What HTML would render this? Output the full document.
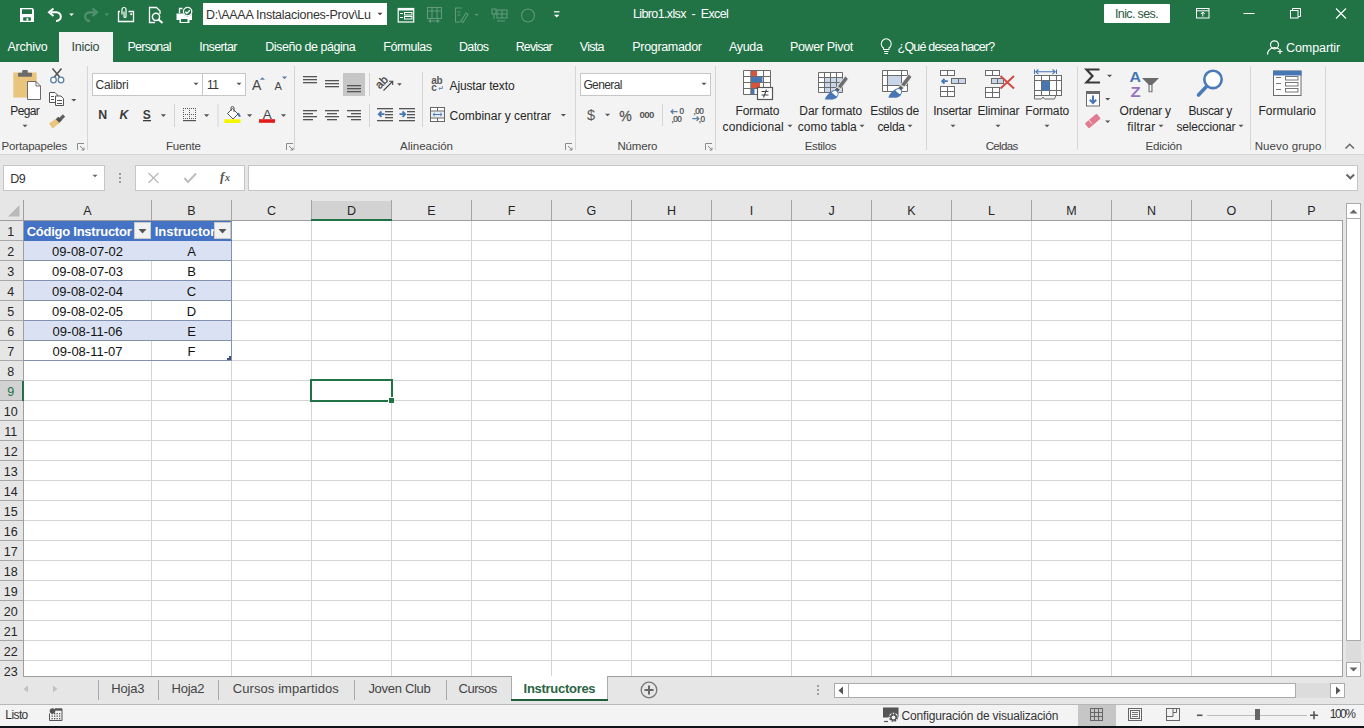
<!DOCTYPE html>
<html><head><meta charset="utf-8">
<style>
*{margin:0;padding:0;box-sizing:border-box}
html,body{width:1364px;height:728px;overflow:hidden;background:#e6e6e6;font-family:"Liberation Sans",sans-serif;position:relative}
.a{position:absolute;display:block}
.t{position:absolute;white-space:nowrap;line-height:1}
</style></head><body>
<div class="a" style="left:0px;top:0px;width:1364px;height:62px;background:#217346;"></div><div class="a" style="left:0px;top:62px;width:1364px;height:92px;background:#f3f3f3;"></div><div class="a" style="left:0px;top:154px;width:1364px;height:1px;background:#d5d5d5;"></div><div class="a" style="left:0px;top:155px;width:1364px;height:46px;background:#e6e6e6;"></div><div class="a" style="left:0px;top:726px;width:1364px;height:2px;background:#10141a;"></div><div class="t" style="left:633.0px;top:8.42px;font-size:12.50px;color:#ffffff;white-space:pre;letter-spacing:-0.629px;">Libro1.xlsx  -  Excel</div><div class="a" style="left:203px;top:3px;width:184px;height:22px;background:#fff;"></div><div class="t" style="left:206.0px;top:8.92px;font-size:12.50px;color:#333;letter-spacing:-0.261px;">D:\AAAA Instalaciones-Prov\Lu</div><svg class="a" style="left:376px;top:11px;" width="8" height="6" viewBox="0 0 8 6"><path d="M1.5 1.75h5.0l-2.5 2.5z" fill="#444"/></svg><div class="a" style="left:1104px;top:4px;width:66px;height:19px;background:#fff;border-radius:1px;"></div><div class="t" style="left:1115.0px;top:7.62px;font-size:12.50px;color:#2d5a3f;letter-spacing:-0.636px;">Inic. ses.</div><div class="a" style="left:59px;top:32px;width:54px;height:30px;background:#f3f3f3;"></div><div class="t" style="left:7.4px;top:41.42px;font-size:12.50px;color:#ffffff;letter-spacing:-0.214px;">Archivo</div><div class="t" style="left:71.6px;top:41.42px;font-size:12.50px;color:#2f4a3a;letter-spacing:-0.256px;">Inicio</div><div class="t" style="left:127.4px;top:41.42px;font-size:12.50px;color:#ffffff;letter-spacing:-0.734px;">Personal</div><div class="t" style="left:199.3px;top:41.42px;font-size:12.50px;color:#ffffff;letter-spacing:-0.597px;">Insertar</div><div class="t" style="left:265.2px;top:41.42px;font-size:12.50px;color:#ffffff;letter-spacing:-0.447px;">Diseño de página</div><div class="t" style="left:383.3px;top:41.42px;font-size:12.50px;color:#ffffff;letter-spacing:-0.485px;">Fórmulas</div><div class="t" style="left:458.9px;top:41.42px;font-size:12.50px;color:#ffffff;letter-spacing:-0.614px;">Datos</div><div class="t" style="left:515.7px;top:41.42px;font-size:12.50px;color:#ffffff;letter-spacing:-0.879px;">Revisar</div><div class="t" style="left:579.8px;top:41.42px;font-size:12.50px;color:#ffffff;letter-spacing:-0.741px;">Vista</div><div class="t" style="left:632.3px;top:41.42px;font-size:12.50px;color:#ffffff;letter-spacing:-0.325px;">Programador</div><div class="t" style="left:729.0px;top:41.42px;font-size:12.50px;color:#ffffff;letter-spacing:-0.330px;">Ayuda</div><div class="t" style="left:790.0px;top:41.42px;font-size:12.50px;color:#ffffff;letter-spacing:-0.349px;">Power Pivot</div><div class="t" style="left:897.6px;top:41.42px;font-size:12.50px;color:#ffffff;letter-spacing:-0.806px;">¿Qué desea hacer?</div><div class="t" style="left:1286.0px;top:41.62px;font-size:12.50px;color:#ffffff;letter-spacing:-0.084px;">Compartir</div><div class="a" style="left:87px;top:66px;width:1px;height:84px;background:#d5d5d5;"></div><div class="a" style="left:294px;top:66px;width:1px;height:84px;background:#d5d5d5;"></div><div class="a" style="left:575px;top:66px;width:1px;height:84px;background:#d5d5d5;"></div><div class="a" style="left:715px;top:66px;width:1px;height:84px;background:#d5d5d5;"></div><div class="a" style="left:926px;top:66px;width:1px;height:84px;background:#d5d5d5;"></div><div class="a" style="left:1077px;top:66px;width:1px;height:84px;background:#d5d5d5;"></div><div class="a" style="left:1250px;top:66px;width:1px;height:84px;background:#d5d5d5;"></div><div class="a" style="left:1325px;top:66px;width:1px;height:84px;background:#d5d5d5;"></div><div class="t" style="left:1.6px;top:140.56px;font-size:11.50px;color:#444;letter-spacing:-0.188px;">Portapapeles</div><div class="t" style="left:166.0px;top:140.56px;font-size:11.50px;color:#444;letter-spacing:-0.161px;">Fuente</div><div class="t" style="left:400.0px;top:140.56px;font-size:11.50px;color:#444;letter-spacing:-0.007px;">Alineación</div><div class="t" style="left:617.5px;top:141.06px;font-size:11.50px;color:#444;letter-spacing:-0.180px;">Número</div><div class="t" style="left:804.8px;top:140.76px;font-size:11.50px;color:#444;letter-spacing:-0.379px;">Estilos</div><div class="t" style="left:985.7px;top:141.06px;font-size:11.50px;color:#444;letter-spacing:-0.660px;">Celdas</div><div class="t" style="left:1145.6px;top:141.06px;font-size:11.50px;color:#444;letter-spacing:-0.203px;">Edición</div><div class="t" style="left:1254.7px;top:141.06px;font-size:11.50px;color:#444;letter-spacing:0.095px;">Nuevo grupo</div><div class="a" style="left:92px;top:73px;width:111px;height:23px;background:#fff;border:1px solid #c6c6c6;"></div><div class="a" style="left:202px;top:73px;width:44px;height:23px;background:#fff;border:1px solid #c6c6c6;"></div><svg class="a" style="left:191.6px;top:81.3px;" width="8" height="6" viewBox="0 0 8 6"><path d="M1.5 1.75h5.0l-2.5 2.5z" fill="#555"/></svg><svg class="a" style="left:234.5px;top:81.3px;" width="8" height="6" viewBox="0 0 8 6"><path d="M1.5 1.75h5.0l-2.5 2.5z" fill="#555"/></svg><div class="a" style="left:580px;top:73px;width:131px;height:23px;background:#fff;border:1px solid #c6c6c6;"></div><svg class="a" style="left:699.5px;top:81.3px;" width="8" height="6" viewBox="0 0 8 6"><path d="M1.5 1.75h5.0l-2.5 2.5z" fill="#555"/></svg><div class="t" style="left:10.3px;top:105.14px;font-size:12.00px;color:#262626;letter-spacing:-0.631px;">Pegar</div><svg class="a" style="left:20.5px;top:123px;" width="8" height="6" viewBox="0 0 8 6"><path d="M1.5 1.75h5.0l-2.5 2.5z" fill="#555"/></svg><div class="t" style="left:95.6px;top:78.64px;font-size:12.00px;color:#333;letter-spacing:-0.168px;">Calibri</div><div class="t" style="left:207.0px;top:78.64px;font-size:12.00px;color:#333;letter-spacing:-0.6px;">11</div><div class="t" style="left:449.6px;top:79.64px;font-size:12.00px;color:#262626;letter-spacing:-0.142px;">Ajustar texto</div><div class="t" style="left:449.6px;top:110.34px;font-size:12.00px;color:#262626;letter-spacing:-0.032px;">Combinar y centrar</div><div class="t" style="left:583.4px;top:78.84px;font-size:12.00px;color:#333;letter-spacing:-0.615px;">General</div><div class="t" style="left:735.5px;top:104.84px;font-size:12.00px;color:#262626;letter-spacing:-0.113px;">Formato</div><div class="t" style="left:722.6px;top:120.64px;font-size:12.00px;color:#262626;letter-spacing:0.096px;">condicional</div><div class="t" style="left:799.3px;top:104.84px;font-size:12.00px;color:#262626;letter-spacing:-0.035px;">Dar formato</div><div class="t" style="left:797.8px;top:120.64px;font-size:12.00px;color:#262626;letter-spacing:0.033px;">como tabla</div><div class="t" style="left:870.3px;top:104.84px;font-size:12.00px;color:#262626;letter-spacing:-0.359px;">Estilos de</div><div class="t" style="left:877.4px;top:120.64px;font-size:12.00px;color:#262626;letter-spacing:-0.272px;">celda</div><div class="t" style="left:933.3px;top:104.74px;font-size:12.00px;color:#262626;letter-spacing:-0.283px;">Insertar</div><div class="t" style="left:977.4px;top:104.74px;font-size:12.00px;color:#262626;letter-spacing:-0.178px;">Eliminar</div><div class="t" style="left:1025.3px;top:104.74px;font-size:12.00px;color:#262626;letter-spacing:-0.113px;">Formato</div><div class="t" style="left:1119.6px;top:105.04px;font-size:12.00px;color:#262626;letter-spacing:-0.245px;">Ordenar y</div><div class="t" style="left:1127.3px;top:120.64px;font-size:12.00px;color:#262626;letter-spacing:0.205px;">filtrar</div><div class="t" style="left:1188.5px;top:105.04px;font-size:12.00px;color:#262626;letter-spacing:-0.426px;">Buscar y</div><div class="t" style="left:1176.4px;top:120.64px;font-size:12.00px;color:#262626;letter-spacing:-0.170px;">seleccionar</div><div class="t" style="left:1258.5px;top:105.44px;font-size:12.00px;color:#262626;letter-spacing:0.017px;">Formulario</div><svg class="a" style="left:786.2px;top:123.3px;" width="8" height="6" viewBox="0 0 8 6"><path d="M1.5 1.75h5.0l-2.5 2.5z" fill="#555"/></svg><svg class="a" style="left:858.3px;top:123.3px;" width="8" height="6" viewBox="0 0 8 6"><path d="M1.5 1.75h5.0l-2.5 2.5z" fill="#555"/></svg><svg class="a" style="left:906.4px;top:123.3px;" width="8" height="6" viewBox="0 0 8 6"><path d="M1.5 1.75h5.0l-2.5 2.5z" fill="#555"/></svg><svg class="a" style="left:948.5px;top:122.9px;" width="8" height="6" viewBox="0 0 8 6"><path d="M1.5 1.75h5.0l-2.5 2.5z" fill="#555"/></svg><svg class="a" style="left:994.4px;top:122.9px;" width="8" height="6" viewBox="0 0 8 6"><path d="M1.5 1.75h5.0l-2.5 2.5z" fill="#555"/></svg><svg class="a" style="left:1043.4px;top:122.9px;" width="8" height="6" viewBox="0 0 8 6"><path d="M1.5 1.75h5.0l-2.5 2.5z" fill="#555"/></svg><svg class="a" style="left:1157px;top:123.2px;" width="8" height="6" viewBox="0 0 8 6"><path d="M1.5 1.75h5.0l-2.5 2.5z" fill="#555"/></svg><svg class="a" style="left:1236.8px;top:123.2px;" width="8" height="6" viewBox="0 0 8 6"><path d="M1.5 1.75h5.0l-2.5 2.5z" fill="#555"/></svg><div class="a" style="left:3px;top:165px;width:102px;height:26px;background:#fff;border:1px solid #c6c6c6;"></div><div class="t" style="left:10.3px;top:173.42px;font-size:12.50px;color:#333;letter-spacing:-0.579px;">D9</div><svg class="a" style="left:90.5px;top:172.7px;" width="8" height="6" viewBox="0 0 8 6"><path d="M1.5 1.75h5.0l-2.5 2.5z" fill="#666"/></svg><div class="a" style="left:119px;top:173px;width:2px;height:2px;background:#9a9a9a;"></div><div class="a" style="left:119px;top:177px;width:2px;height:2px;background:#9a9a9a;"></div><div class="a" style="left:119px;top:181px;width:2px;height:2px;background:#9a9a9a;"></div><div class="a" style="left:135px;top:165px;width:110px;height:26px;background:#fff;border:1px solid #c6c6c6;"></div><div class="a" style="left:248px;top:165px;width:1110px;height:26px;background:#fff;border:1px solid #c6c6c6;"></div><div class="a" style="left:24px;top:201px;width:1319px;height:19px;background:#e6e6e6;"></div><div class="a" style="left:311px;top:201px;width:81px;height:18px;background:#d2d2d2;"></div><div class="a" style="left:0px;top:220px;width:1343px;height:1px;background:#9e9e9e;"></div><div class="a" style="left:23px;top:200px;width:1px;height:20px;background:#a5a5a5;"></div><div class="a" style="left:151px;top:200px;width:1px;height:20px;background:#a5a5a5;"></div><div class="a" style="left:231px;top:200px;width:1px;height:20px;background:#a5a5a5;"></div><div class="a" style="left:311px;top:200px;width:1px;height:20px;background:#a5a5a5;"></div><div class="a" style="left:391px;top:200px;width:1px;height:20px;background:#a5a5a5;"></div><div class="a" style="left:471px;top:200px;width:1px;height:20px;background:#a5a5a5;"></div><div class="a" style="left:551px;top:200px;width:1px;height:20px;background:#a5a5a5;"></div><div class="a" style="left:631px;top:200px;width:1px;height:20px;background:#a5a5a5;"></div><div class="a" style="left:711px;top:200px;width:1px;height:20px;background:#a5a5a5;"></div><div class="a" style="left:791px;top:200px;width:1px;height:20px;background:#a5a5a5;"></div><div class="a" style="left:871px;top:200px;width:1px;height:20px;background:#a5a5a5;"></div><div class="a" style="left:951px;top:200px;width:1px;height:20px;background:#a5a5a5;"></div><div class="a" style="left:1031px;top:200px;width:1px;height:20px;background:#a5a5a5;"></div><div class="a" style="left:1111px;top:200px;width:1px;height:20px;background:#a5a5a5;"></div><div class="a" style="left:1191px;top:200px;width:1px;height:20px;background:#a5a5a5;"></div><div class="a" style="left:1271px;top:200px;width:1px;height:20px;background:#a5a5a5;"></div><div class="a" style="left:0px;top:221px;width:23px;height:456px;background:#e6e6e6;"></div><div class="a" style="left:0px;top:381px;width:22px;height:20px;background:#d2d2d2;"></div><div class="a" style="left:23px;top:200px;width:1px;height:477px;background:#9e9e9e;"></div><div class="a" style="left:24px;top:221px;width:1318px;height:456px;background:#fff;"></div><div class="a" style="left:24px;top:240px;width:1318px;height:1px;background:#d4d4d4;"></div><div class="a" style="left:0px;top:240px;width:23px;height:1px;background:#a8a8a8;"></div><div class="a" style="left:24px;top:260px;width:1318px;height:1px;background:#d4d4d4;"></div><div class="a" style="left:0px;top:260px;width:23px;height:1px;background:#a8a8a8;"></div><div class="a" style="left:24px;top:280px;width:1318px;height:1px;background:#d4d4d4;"></div><div class="a" style="left:0px;top:280px;width:23px;height:1px;background:#a8a8a8;"></div><div class="a" style="left:24px;top:300px;width:1318px;height:1px;background:#d4d4d4;"></div><div class="a" style="left:0px;top:300px;width:23px;height:1px;background:#a8a8a8;"></div><div class="a" style="left:24px;top:320px;width:1318px;height:1px;background:#d4d4d4;"></div><div class="a" style="left:0px;top:320px;width:23px;height:1px;background:#a8a8a8;"></div><div class="a" style="left:24px;top:340px;width:1318px;height:1px;background:#d4d4d4;"></div><div class="a" style="left:0px;top:340px;width:23px;height:1px;background:#a8a8a8;"></div><div class="a" style="left:24px;top:360px;width:1318px;height:1px;background:#d4d4d4;"></div><div class="a" style="left:0px;top:360px;width:23px;height:1px;background:#a8a8a8;"></div><div class="a" style="left:24px;top:380px;width:1318px;height:1px;background:#d4d4d4;"></div><div class="a" style="left:0px;top:380px;width:23px;height:1px;background:#a8a8a8;"></div><div class="a" style="left:24px;top:400px;width:1318px;height:1px;background:#d4d4d4;"></div><div class="a" style="left:0px;top:400px;width:23px;height:1px;background:#a8a8a8;"></div><div class="a" style="left:24px;top:420px;width:1318px;height:1px;background:#d4d4d4;"></div><div class="a" style="left:0px;top:420px;width:23px;height:1px;background:#a8a8a8;"></div><div class="a" style="left:24px;top:440px;width:1318px;height:1px;background:#d4d4d4;"></div><div class="a" style="left:0px;top:440px;width:23px;height:1px;background:#a8a8a8;"></div><div class="a" style="left:24px;top:460px;width:1318px;height:1px;background:#d4d4d4;"></div><div class="a" style="left:0px;top:460px;width:23px;height:1px;background:#a8a8a8;"></div><div class="a" style="left:24px;top:480px;width:1318px;height:1px;background:#d4d4d4;"></div><div class="a" style="left:0px;top:480px;width:23px;height:1px;background:#a8a8a8;"></div><div class="a" style="left:24px;top:500px;width:1318px;height:1px;background:#d4d4d4;"></div><div class="a" style="left:0px;top:500px;width:23px;height:1px;background:#a8a8a8;"></div><div class="a" style="left:24px;top:520px;width:1318px;height:1px;background:#d4d4d4;"></div><div class="a" style="left:0px;top:520px;width:23px;height:1px;background:#a8a8a8;"></div><div class="a" style="left:24px;top:540px;width:1318px;height:1px;background:#d4d4d4;"></div><div class="a" style="left:0px;top:540px;width:23px;height:1px;background:#a8a8a8;"></div><div class="a" style="left:24px;top:560px;width:1318px;height:1px;background:#d4d4d4;"></div><div class="a" style="left:0px;top:560px;width:23px;height:1px;background:#a8a8a8;"></div><div class="a" style="left:24px;top:580px;width:1318px;height:1px;background:#d4d4d4;"></div><div class="a" style="left:0px;top:580px;width:23px;height:1px;background:#a8a8a8;"></div><div class="a" style="left:24px;top:600px;width:1318px;height:1px;background:#d4d4d4;"></div><div class="a" style="left:0px;top:600px;width:23px;height:1px;background:#a8a8a8;"></div><div class="a" style="left:24px;top:620px;width:1318px;height:1px;background:#d4d4d4;"></div><div class="a" style="left:0px;top:620px;width:23px;height:1px;background:#a8a8a8;"></div><div class="a" style="left:24px;top:640px;width:1318px;height:1px;background:#d4d4d4;"></div><div class="a" style="left:0px;top:640px;width:23px;height:1px;background:#a8a8a8;"></div><div class="a" style="left:24px;top:660px;width:1318px;height:1px;background:#d4d4d4;"></div><div class="a" style="left:0px;top:660px;width:23px;height:1px;background:#a8a8a8;"></div><div class="a" style="left:151px;top:221px;width:1px;height:456px;background:#d4d4d4;"></div><div class="a" style="left:231px;top:221px;width:1px;height:456px;background:#d4d4d4;"></div><div class="a" style="left:311px;top:221px;width:1px;height:456px;background:#d4d4d4;"></div><div class="a" style="left:391px;top:221px;width:1px;height:456px;background:#d4d4d4;"></div><div class="a" style="left:471px;top:221px;width:1px;height:456px;background:#d4d4d4;"></div><div class="a" style="left:551px;top:221px;width:1px;height:456px;background:#d4d4d4;"></div><div class="a" style="left:631px;top:221px;width:1px;height:456px;background:#d4d4d4;"></div><div class="a" style="left:711px;top:221px;width:1px;height:456px;background:#d4d4d4;"></div><div class="a" style="left:791px;top:221px;width:1px;height:456px;background:#d4d4d4;"></div><div class="a" style="left:871px;top:221px;width:1px;height:456px;background:#d4d4d4;"></div><div class="a" style="left:951px;top:221px;width:1px;height:456px;background:#d4d4d4;"></div><div class="a" style="left:1031px;top:221px;width:1px;height:456px;background:#d4d4d4;"></div><div class="a" style="left:1111px;top:221px;width:1px;height:456px;background:#d4d4d4;"></div><div class="a" style="left:1191px;top:221px;width:1px;height:456px;background:#d4d4d4;"></div><div class="a" style="left:1271px;top:221px;width:1px;height:456px;background:#d4d4d4;"></div><div class="a" style="left:1342px;top:220px;width:1px;height:457px;background:#9e9e9e;"></div><div class="a" style="left:24px;top:676px;width:1319px;height:1px;background:#9e9e9e;"></div><div class="a" style="left:311px;top:219px;width:81px;height:2px;background:#217346;"></div><div class="a" style="left:22px;top:381px;width:2px;height:20px;background:#217346;"></div><div class="t" style="left:83.3px;top:205.42px;font-size:12.50px;color:#262626;">A</div><div class="t" style="left:187.3px;top:205.42px;font-size:12.50px;color:#262626;">B</div><div class="t" style="left:267.0px;top:205.42px;font-size:12.50px;color:#262626;">C</div><div class="t" style="left:347.0px;top:205.42px;font-size:12.50px;color:#262626;">D</div><div class="t" style="left:427.3px;top:205.42px;font-size:12.50px;color:#262626;">E</div><div class="t" style="left:507.7px;top:205.42px;font-size:12.50px;color:#262626;">F</div><div class="t" style="left:586.6px;top:205.42px;font-size:12.50px;color:#262626;">G</div><div class="t" style="left:667.0px;top:205.42px;font-size:12.50px;color:#262626;">H</div><div class="t" style="left:749.8px;top:205.42px;font-size:12.50px;color:#262626;">I</div><div class="t" style="left:828.4px;top:205.42px;font-size:12.50px;color:#262626;">J</div><div class="t" style="left:907.3px;top:205.42px;font-size:12.50px;color:#262626;">K</div><div class="t" style="left:988.0px;top:205.42px;font-size:12.50px;color:#262626;">L</div><div class="t" style="left:1066.3px;top:205.42px;font-size:12.50px;color:#262626;">M</div><div class="t" style="left:1147.0px;top:205.42px;font-size:12.50px;color:#262626;">N</div><div class="t" style="left:1226.6px;top:205.42px;font-size:12.50px;color:#262626;">O</div><div class="t" style="left:1307.3px;top:205.42px;font-size:12.50px;color:#262626;">P</div><div class="t" style="left:7.3px;top:226.42px;font-size:12.50px;color:#262626;">1</div><div class="t" style="left:7.3px;top:246.42px;font-size:12.50px;color:#262626;">2</div><div class="t" style="left:7.3px;top:266.42px;font-size:12.50px;color:#262626;">3</div><div class="t" style="left:7.3px;top:286.42px;font-size:12.50px;color:#262626;">4</div><div class="t" style="left:7.3px;top:306.42px;font-size:12.50px;color:#262626;">5</div><div class="t" style="left:7.3px;top:326.42px;font-size:12.50px;color:#262626;">6</div><div class="t" style="left:7.3px;top:346.42px;font-size:12.50px;color:#262626;">7</div><div class="t" style="left:7.3px;top:366.42px;font-size:12.50px;color:#262626;">8</div><div class="t" style="left:7.3px;top:386.42px;font-size:12.50px;color:#217346;">9</div><div class="t" style="left:3.8px;top:406.42px;font-size:12.50px;color:#262626;">10</div><div class="t" style="left:4.3px;top:426.42px;font-size:12.50px;color:#262626;">11</div><div class="t" style="left:3.8px;top:446.42px;font-size:12.50px;color:#262626;">12</div><div class="t" style="left:3.8px;top:466.42px;font-size:12.50px;color:#262626;">13</div><div class="t" style="left:3.8px;top:486.42px;font-size:12.50px;color:#262626;">14</div><div class="t" style="left:3.8px;top:506.42px;font-size:12.50px;color:#262626;">15</div><div class="t" style="left:3.8px;top:526.42px;font-size:12.50px;color:#262626;">16</div><div class="t" style="left:3.8px;top:546.42px;font-size:12.50px;color:#262626;">17</div><div class="t" style="left:3.8px;top:566.42px;font-size:12.50px;color:#262626;">18</div><div class="t" style="left:3.8px;top:586.42px;font-size:12.50px;color:#262626;">19</div><div class="t" style="left:3.8px;top:606.42px;font-size:12.50px;color:#262626;">20</div><div class="t" style="left:3.8px;top:626.42px;font-size:12.50px;color:#262626;">21</div><div class="t" style="left:3.8px;top:646.42px;font-size:12.50px;color:#262626;">22</div><div class="t" style="left:3.8px;top:666.42px;font-size:12.50px;color:#262626;">23</div><div class="a" style="left:24px;top:221px;width:208px;height:20px;background:#4472c4;"></div><div class="a" style="left:24px;top:241px;width:208px;height:20px;background:#d9e1f2;"></div><div class="a" style="left:24px;top:281px;width:208px;height:20px;background:#d9e1f2;"></div><div class="a" style="left:24px;top:321px;width:208px;height:20px;background:#d9e1f2;"></div><div class="a" style="left:24px;top:260px;width:208px;height:1px;background:#8290b2;"></div><div class="a" style="left:24px;top:280px;width:208px;height:1px;background:#8290b2;"></div><div class="a" style="left:24px;top:300px;width:208px;height:1px;background:#8290b2;"></div><div class="a" style="left:24px;top:320px;width:208px;height:1px;background:#8290b2;"></div><div class="a" style="left:24px;top:340px;width:208px;height:1px;background:#8290b2;"></div><div class="a" style="left:24px;top:360px;width:208px;height:1px;background:#8290b2;"></div><div class="a" style="left:231px;top:221px;width:1px;height:140px;background:#8290b2;"></div><div class="a" style="left:24px;top:240px;width:208px;height:1px;background:#4472c4;"></div><div class="a" style="left:134px;top:222px;width:17px;height:17px;background:#f1f1f1;border:1px solid #c9c9c9;"></div><svg class="a" style="left:138px;top:229px;" width="9" height="5" viewBox="0 0 9 5"><path d="M0.5 0h8l-4 4.5z" fill="#555"/></svg><div class="a" style="left:214px;top:222px;width:17px;height:17px;background:#f1f1f1;border:1px solid #c9c9c9;"></div><svg class="a" style="left:218px;top:229px;" width="9" height="5" viewBox="0 0 9 5"><path d="M0.5 0h8l-4 4.5z" fill="#555"/></svg><div class="t" style="left:26.7px;top:224.99px;font-size:13.00px;color:#fff;font-weight:bold;letter-spacing:-0.253px;">Código Instructor</div><div class="t" style="left:154.7px;top:224.99px;font-size:13.00px;color:#fff;font-weight:bold;">Instructor</div><div class="a" style="left:214px;top:222px;width:17px;height:17px;background:#f1f1f1;border:1px solid #c9c9c9;"></div><svg class="a" style="left:218px;top:229px;" width="9" height="5" viewBox="0 0 9 5"><path d="M0.5 0h8l-4 4.5z" fill="#555"/></svg><div class="t" style="left:52.1px;top:244.99px;font-size:13.00px;color:#111;">09-08-07-02</div><div class="t" style="left:187.2px;top:244.99px;font-size:13.00px;color:#111;">A</div><div class="t" style="left:52.1px;top:264.99px;font-size:13.00px;color:#111;">09-08-07-03</div><div class="t" style="left:187.2px;top:264.99px;font-size:13.00px;color:#111;">B</div><div class="t" style="left:52.1px;top:284.99px;font-size:13.00px;color:#111;">09-08-02-04</div><div class="t" style="left:186.8px;top:284.99px;font-size:13.00px;color:#111;">C</div><div class="t" style="left:52.1px;top:304.99px;font-size:13.00px;color:#111;">09-08-02-05</div><div class="t" style="left:186.8px;top:304.99px;font-size:13.00px;color:#111;">D</div><div class="t" style="left:52.6px;top:324.99px;font-size:13.00px;color:#111;">09-08-11-06</div><div class="t" style="left:187.2px;top:324.99px;font-size:13.00px;color:#111;">E</div><div class="t" style="left:52.6px;top:344.99px;font-size:13.00px;color:#111;">09-08-11-07</div><div class="t" style="left:187.5px;top:344.99px;font-size:13.00px;color:#111;">F</div><svg class="a" style="left:227px;top:356px;" width="4" height="4" viewBox="0 0 4 4"><path d="M2 0h2v4h-4v-2h2z" fill="#45507a"/></svg><div class="a" style="left:310px;top:379px;width:83px;height:23px;background:transparent;border:2px solid #217346;"></div><div class="a" style="left:388px;top:397px;width:6px;height:6px;background:#fff;"></div><div class="a" style="left:389px;top:398px;width:5px;height:5px;background:#217346;"></div><div class="a" style="left:1343px;top:201px;width:21px;height:476px;background:#e6e6e6;"></div><div class="a" style="left:1346px;top:203px;width:15px;height:474px;background:#dcdcdc;"></div><div class="a" style="left:1346px;top:203px;width:15px;height:16px;background:#fff;border:1px solid #ababab;"></div><svg class="a" style="left:1349px;top:208px;" width="9" height="6" viewBox="0 0 9 6"><path d="M0.5 5.5L4.5 1.5L8.5 5.5z" fill="#666"/></svg><div class="a" style="left:1346px;top:218px;width:15px;height:423px;background:#fff;border:1px solid #ababab;"></div><div class="a" style="left:1346px;top:662px;width:15px;height:15px;background:#fff;border:1px solid #ababab;"></div><svg class="a" style="left:1349px;top:667px;" width="9" height="6" viewBox="0 0 9 6"><path d="M0.5 0.5L4.5 4.5L8.5 0.5z" fill="#666"/></svg><div class="a" style="left:0px;top:677px;width:1364px;height:27px;background:#e6e6e6;"></div><div class="a" style="left:0px;top:704px;width:1364px;height:1px;background:#b8b8b8;"></div><div class="a" style="left:0px;top:705px;width:1364px;height:21px;background:#f3f3f3;"></div><svg class="a" style="left:22px;top:684px;" width="8" height="10" viewBox="0 0 8 10"><path d="M6 1.5v7l-4.5-3.5z" fill="#c2c2c2"/></svg><svg class="a" style="left:51px;top:684px;" width="8" height="10" viewBox="0 0 8 10"><path d="M2 1.5v7l4.5-3.5z" fill="#c2c2c2"/></svg><div class="a" style="left:98px;top:680px;width:1px;height:20px;background:#a8a8a8;"></div><div class="a" style="left:158px;top:680px;width:1px;height:20px;background:#a8a8a8;"></div><div class="a" style="left:218px;top:680px;width:1px;height:20px;background:#a8a8a8;"></div><div class="a" style="left:354px;top:680px;width:1px;height:20px;background:#a8a8a8;"></div><div class="a" style="left:446px;top:680px;width:1px;height:20px;background:#a8a8a8;"></div><div class="t" style="left:111.2px;top:682.39px;font-size:13.00px;color:#444;letter-spacing:-0.142px;">Hoja3</div><div class="t" style="left:171.6px;top:682.39px;font-size:13.00px;color:#444;letter-spacing:-0.242px;">Hoja2</div><div class="t" style="left:232.8px;top:682.39px;font-size:13.00px;color:#444;letter-spacing:0.078px;">Cursos impartidos</div><div class="t" style="left:368.4px;top:682.39px;font-size:13.00px;color:#444;letter-spacing:-0.293px;">Joven Club</div><div class="t" style="left:458.5px;top:682.39px;font-size:13.00px;color:#444;letter-spacing:-0.496px;">Cursos</div><div class="a" style="left:511px;top:676px;width:97px;height:25px;background:#fff;border-left:1px solid #ababab;border-right:1px solid #ababab;"></div><div class="a" style="left:511px;top:699px;width:97px;height:2px;background:#1e5e3a;"></div><div class="t" style="left:523.6px;top:682.39px;font-size:13.00px;color:#2a6443;font-weight:bold;letter-spacing:-0.285px;">Instructores</div><svg class="a" style="left:640px;top:681px;" width="18" height="18" viewBox="0 0 18 18"><circle cx="9" cy="9" r="7.8" fill="none" stroke="#777" stroke-width="1.3"/><path d="M9 4.5v9M4.5 9h9" stroke="#666" stroke-width="2"/></svg><div class="a" style="left:817px;top:685px;width:2px;height:2px;background:#a0a0a0;"></div><div class="a" style="left:817px;top:689px;width:2px;height:2px;background:#a0a0a0;"></div><div class="a" style="left:817px;top:693px;width:2px;height:2px;background:#a0a0a0;"></div><div class="a" style="left:834px;top:683px;width:511px;height:15px;background:#dcdcdc;"></div><div class="a" style="left:834px;top:683px;width:15px;height:15px;background:#fff;border:1px solid #ababab;"></div><svg class="a" style="left:836px;top:686px;" width="10" height="9" viewBox="0 0 10 9"><path d="M7 0.5v8l-4.5-4z" fill="#555"/></svg><div class="a" style="left:848px;top:683px;width:448px;height:15px;background:#fff;border:1px solid #ababab;"></div><div class="a" style="left:1330px;top:683px;width:15px;height:15px;background:#fff;border:1px solid #ababab;"></div><svg class="a" style="left:1333px;top:686px;" width="10" height="9" viewBox="0 0 10 9"><path d="M3 0.5v8l4.5-4z" fill="#555"/></svg><div class="t" style="left:5.3px;top:709.14px;font-size:12.00px;color:#333;letter-spacing:-0.587px;">Listo</div><div class="t" style="left:901.5px;top:709.64px;font-size:12.00px;color:#333;letter-spacing:-0.176px;">Configuración de visualización</div><div class="a" style="left:1078px;top:705px;width:38px;height:21px;background:#c6c6c6;"></div><div class="t" style="left:1329.7px;top:708.44px;font-size:12.00px;color:#333;letter-spacing:-1.464px;">100%</div><svg class="a" style="left:0;top:0" width="1364" height="728" viewBox="0 0 1364 728"><path d="M20 8h12.5l1.5 1.5V22H20z" fill="#fff"/><rect x="22" y="9.3" width="10" height="4.7" fill="#217346"/><rect x="23.2" y="17.3" width="7.7" height="3.4" fill="#217346"/><rect x="26.5" y="18.3" width="1.8" height="2.4" fill="#fff"/><path d="M51 12.3h5.5a4.3 4.3 0 0 1 0 8.6h-0.5" fill="none" stroke="#fff" stroke-width="2"/><path d="M53.5 8.5L49 12.3L53.5 16" fill="none" stroke="#fff" stroke-width="2" stroke-linejoin="miter"/><path d="M69.10 13.60h4.80l-2.40 2.40z" fill="#fff"/><g opacity="0.22"><path d="M95 12.3h-5.5a4.3 4.3 0 0 0 0 8.6h0.5" fill="none" stroke="#fff" stroke-width="2.2"/><path d="M92.5 8.5L97 12.3L92.5 16" fill="none" stroke="#fff" stroke-width="2.2"/></g><path d="M104.30 13.60h4.80l-2.40 2.40z" fill="rgba(255,255,255,0.22)"/><path d="M120 11.5h-1.5v10h15v-10h-5" fill="none" stroke="#fff" stroke-width="1.3"/><path d="M122 14.5v-5a2 2 0 0 1 4 0v7a1 1 0 0 1 -2 0v-5" fill="none" stroke="#fff" stroke-width="1.2"/><rect x="130.3" y="13.3" width="1.8" height="1.8" fill="#fff"/><path d="M155 22.5h-5.5v-15h7l3.5 3.5v3" fill="none" stroke="#fff" stroke-width="1.3"/><circle cx="156" cy="16.8" r="3.6" fill="none" stroke="#fff" stroke-width="1.5"/><path d="M158.5 19.5l4 3.5" stroke="#fff" stroke-width="2"/><path d="M176.5 13.5h15.5v6.5h-2.5v3h-10v-3h-3z" fill="#fff"/><rect x="181" y="19" width="6.5" height="3" fill="#217346"/><path d="M179.5 13v-4.5h3" fill="none" stroke="#fff" stroke-width="1.3"/><circle cx="187.6" cy="11.6" r="4.8" fill="#217346"/><circle cx="187.6" cy="11.6" r="4.2" fill="none" stroke="#fff" stroke-width="1.3"/><path d="M185.3 11.7l1.6 1.6l3-3" fill="none" stroke="#fff" stroke-width="1.3"/><rect x="398.2" y="8.5" width="15.5" height="13.5" fill="none" stroke="#fff" stroke-width="1.2"/><rect x="398.2" y="8.5" width="15.5" height="2" fill="#fff"/><path d="M400 13.5h3M400 17.5h3" stroke="#fff" stroke-width="1.2"/><rect x="404.5" y="12.5" width="7.5" height="2.5" fill="none" stroke="#fff" stroke-width="1"/><rect x="404.5" y="16.5" width="7.5" height="2.5" fill="none" stroke="#fff" stroke-width="1"/><g opacity="0.28" fill="none" stroke="#fff" stroke-width="1.1">
<rect x="427.5" y="7.5" width="14" height="11"/><path d="M427.5 11h14M432 7.5v11M437 7.5v11"/>
<path d="M429 21h10M431 19.5l-2 1.5l2 1.5M437 19.5l2 1.5l-2 1.5"/>
<path d="M462 8h-6.5v14h5"/><path d="M461 21l5-8l2 1.5l-5 8z"/><path d="M457.5 12h3M457.5 15h3"/>
<rect x="497" y="10" width="10" height="8"/><path d="M497 14h10M502 10v8"/><rect x="492" y="9" width="4" height="5"/><path d="M494 14v5M497 21h8"/>
<circle cx="528" cy="15.5" r="6.5"/>
</g><path d="M474.30 13.90h4.40l-2.20 2.20z" fill="rgba(255,255,255,0.28)"/><rect x="554" y="11.2" width="5.5" height="1.2" fill="#fff"/><path d="M554.00 14.85h5.40l-2.70 2.70z" fill="#fff"/><rect x="1196.5" y="8.5" width="12.5" height="9.5" fill="none" stroke="#fff" stroke-width="1"/><path d="M1196.5 10.8h12.5" stroke="#fff" stroke-width="1"/><path d="M1202.8 16.5v-4.5M1200.8 14l2-2l2 2" fill="none" stroke="#fff" stroke-width="1"/><path d="M1243.5 13.5h11" stroke="#fff" stroke-width="1"/><rect x="1290.5" y="10.5" width="7.5" height="7.5" fill="none" stroke="#fff" stroke-width="1"/><path d="M1292.5 10.5v-2h8v8h-2.5" fill="none" stroke="#fff" stroke-width="1"/><path d="M1336 8.5l10 10M1346 8.5l-10 10" stroke="#fff" stroke-width="1.1"/><circle cx="1274.5" cy="44.8" r="4" fill="none" stroke="#fff" stroke-width="1.2"/><path d="M1267.5 54.5a7.2 7.2 0 0 1 11.5-5.5" fill="none" stroke="#fff" stroke-width="1.2"/><path d="M1277.5 51.5h5M1280 49v5" stroke="#fff" stroke-width="1.2"/><path d="M883.5 49.5v-1.5a5 5 0 1 1 5.5 0v1.5z" fill="none" stroke="#fff" stroke-width="1.1"/><path d="M884 51.5h4.5M884.5 53.5h3.5" stroke="#fff" stroke-width="1.1"/><rect x="13.3" y="72.5" width="23.3" height="25" fill="#e9c47c"/><rect x="18" y="72.8" width="14" height="4" rx="0.8" fill="#6b6b6b"/><rect x="22.2" y="70" width="5.6" height="3.5" rx="1" fill="#6b6b6b"/><path d="M27.5 81.5h8.5l4.5 4.5v13.5h-13z" fill="#fff" stroke="#6b6b6b" stroke-width="1"/><path d="M36 81.5v4.5h4.5" fill="none" stroke="#6b6b6b" stroke-width="1"/><path d="M52.5 68.5L60 77.5M61.5 68.5L54 77.5" stroke="#555" stroke-width="1.6"/><circle cx="53.5" cy="80" r="2.8" fill="#fff" stroke="#5b80aa" stroke-width="1.3"/><circle cx="61" cy="80" r="2.8" fill="#fff" stroke="#5b80aa" stroke-width="1.3"/><path d="M49.5 92.5h5.5l2.5 2.5v7.5h-8z" fill="#fff" stroke="#555" stroke-width="1"/><path d="M51 96.5h3M51 99.5h3" stroke="#555" stroke-width="1"/><path d="M55.5 96h5.5l2.5 2.5v7h-8z" fill="#fff" stroke="#555" stroke-width="1"/><path d="M57 100.5h5M57 103.5h5" stroke="#555" stroke-width="1"/><path d="M71.20 98.90h5.20l-2.60 2.60z" fill="#555"/><path d="M64 115.5L59 120.5" stroke="#606060" stroke-width="3.2"/><path d="M60 118.5L56.5 122" stroke="#505050" stroke-width="5"/><path d="M55.5 119L49 123.5L52.5 128.5L59.5 123z" fill="#e9c47c"/><text x="98.3" y="118.8" font-family="Liberation Sans" font-weight="bold" font-size="12.3" fill="#3b3b3b">N</text><text x="119.5" y="118.8" font-family="Liberation Sans" font-weight="bold" font-style="italic" font-size="12.3" fill="#3b3b3b">K</text><text x="142.8" y="118.8" font-family="Liberation Sans" font-weight="bold" font-size="12" fill="#3b3b3b">S</text><rect x="143" y="120" width="8" height="1.3" fill="#3b3b3b"/><path d="M160.80 114.30h5.20l-2.60 2.60z" fill="#555"/><rect x="174" y="104" width="1" height="23" fill="#d5d5d5"/><rect x="217.5" y="104" width="1" height="23" fill="#d5d5d5"/><text x="252" y="90" font-family="Liberation Sans" font-size="14" fill="#444">A</text><path d="M259.8 79.8h5.2l-2.6-2.6z" fill="#5b80aa"/><text x="274.5" y="90" font-family="Liberation Sans" font-size="11" fill="#444">A</text><path d="M282 76.5h5l-2.5 2.8z" fill="#5b80aa"/><g fill="#555"><rect x="183" y="108" width="1" height="1"/><rect x="183" y="110" width="1" height="1"/><rect x="183" y="112" width="1" height="1"/><rect x="183" y="114" width="1" height="1"/><rect x="183" y="116" width="1" height="1"/><rect x="183" y="118" width="1" height="1"/><rect x="185" y="108" width="1" height="1"/><rect x="185" y="114" width="1" height="1"/><rect x="185" y="118" width="1" height="1"/><rect x="187" y="108" width="1" height="1"/><rect x="187" y="114" width="1" height="1"/><rect x="187" y="118" width="1" height="1"/><rect x="189" y="108" width="1" height="1"/><rect x="189" y="110" width="1" height="1"/><rect x="189" y="112" width="1" height="1"/><rect x="189" y="114" width="1" height="1"/><rect x="189" y="116" width="1" height="1"/><rect x="189" y="118" width="1" height="1"/><rect x="191" y="108" width="1" height="1"/><rect x="191" y="114" width="1" height="1"/><rect x="191" y="118" width="1" height="1"/><rect x="193" y="108" width="1" height="1"/><rect x="193" y="114" width="1" height="1"/><rect x="193" y="118" width="1" height="1"/><rect x="195" y="108" width="1" height="1"/><rect x="195" y="110" width="1" height="1"/><rect x="195" y="112" width="1" height="1"/><rect x="195" y="114" width="1" height="1"/><rect x="195" y="116" width="1" height="1"/><rect x="195" y="118" width="1" height="1"/></g><rect x="183" y="120" width="13" height="1.2" fill="#555"/><path d="M204.00 114.30h5.20l-2.60 2.60z" fill="#555"/><path d="M232.5 108.5l5.5 5.5l-5 5l-5.5-5.5z" fill="#fff" stroke="#555" stroke-width="1"/><path d="M231 111v-3a1.5 1.5 0 0 1 3 0v4" fill="none" stroke="#555" stroke-width="1"/><path d="M238 112.5q3 2 2.5 4.5q-1.5 0.5-2.5-1.5z" fill="#4676b4"/><rect x="224.3" y="119.3" width="16.2" height="3.7" fill="#f5f500"/><path d="M247.00 114.30h5.20l-2.60 2.60z" fill="#555"/><text x="262.8" y="119" font-family="Liberation Sans" font-size="13.5" fill="#444">A</text><rect x="259" y="119.2" width="16" height="3.6" fill="#e31b1b"/><path d="M280.90 114.30h5.20l-2.60 2.60z" fill="#555"/><rect x="303" y="76" width="14" height="1.3" fill="#555"/><rect x="303" y="79" width="14" height="1.3" fill="#555"/><rect x="303" y="82" width="14" height="1.3" fill="#555"/><rect x="325" y="80" width="14" height="1.3" fill="#555"/><rect x="325" y="83" width="14" height="1.3" fill="#555"/><rect x="325" y="86" width="14" height="1.3" fill="#555"/><rect x="343" y="73" width="22" height="23" fill="#c6c6c6"/><rect x="347" y="85" width="14" height="1.3" fill="#555"/><rect x="347" y="88" width="14" height="1.3" fill="#555"/><rect x="347" y="91" width="14" height="1.3" fill="#555"/><rect x="369" y="73" width="1" height="23" fill="#d5d5d5"/><rect x="369" y="104" width="1" height="23" fill="#d5d5d5"/><rect x="303" y="110" width="14" height="1.3" fill="#555"/><rect x="303" y="113" width="10" height="1.3" fill="#555"/><rect x="303" y="116" width="14" height="1.3" fill="#555"/><rect x="303" y="119" width="10" height="1.3" fill="#555"/><rect x="325" y="110" width="14" height="1.3" fill="#555"/><rect x="327" y="113" width="10" height="1.3" fill="#555"/><rect x="325" y="116" width="14" height="1.3" fill="#555"/><rect x="327" y="119" width="10" height="1.3" fill="#555"/><rect x="347" y="110" width="14" height="1.3" fill="#555"/><rect x="351" y="113" width="10" height="1.3" fill="#555"/><rect x="347" y="116" width="14" height="1.3" fill="#555"/><rect x="351" y="119" width="10" height="1.3" fill="#555"/><text x="0" y="0" font-family="Liberation Sans" font-size="11.5" fill="#3a3a3a" stroke="#3a3a3a" stroke-width="0.25" transform="translate(379.8 89.6) rotate(-45)">ab</text><path d="M383.5 90.5L392.5 81.5" stroke="#444" stroke-width="1.1"/><path d="M389 81.3h3.7v3.7" fill="none" stroke="#444" stroke-width="1.1"/><path d="M397.20 83.35h4.60l-2.30 2.30z" fill="#555"/><rect x="377" y="108" width="16" height="1.3" fill="#555"/><rect x="377" y="120" width="16" height="1.3" fill="#555"/><rect x="385" y="111" width="8" height="1.3" fill="#555"/><rect x="385" y="114" width="8" height="1.3" fill="#555"/><rect x="385" y="117" width="8" height="1.3" fill="#555"/><path d="M384.5 114.2h-5M381.5 111.5l-2.7 2.7l2.7 2.7" fill="none" stroke="#4676b4" stroke-width="1.8"/><rect x="399" y="108" width="16" height="1.3" fill="#555"/><rect x="399" y="120" width="16" height="1.3" fill="#555"/><rect x="407" y="111" width="8" height="1.3" fill="#555"/><rect x="407" y="114" width="8" height="1.3" fill="#555"/><rect x="407" y="117" width="8" height="1.3" fill="#555"/><path d="M399.5 114.2h5M402.5 111.5l2.7 2.7l-2.7 2.7" fill="none" stroke="#4676b4" stroke-width="1.8"/><rect x="422" y="72" width="1" height="55" fill="#d5d5d5"/><text x="431.3" y="83.6" font-family="Liberation Sans" font-weight="bold" font-size="10" fill="#5a5a5a" letter-spacing="-0.3">ab</text><text x="431.3" y="90.6" font-family="Liberation Sans" font-weight="bold" font-size="10" fill="#5a5a5a">c</text><path d="M442.3 86v2.5h-3M440 87.3l-1.2 1.2l1.2 1.2" fill="none" stroke="#5b80aa" stroke-width="0.9"/><rect x="430.5" y="107.5" width="14" height="14" fill="#fff" stroke="#666" stroke-width="1"/><rect x="431" y="111.5" width="13" height="6" fill="#e6edf6"/><path d="M430.5 111h14M430.5 118h14M437.5 107.5v3.5M437.5 118v3.5" stroke="#666" stroke-width="1"/><path d="M433 114.5h9M434.7 113l-1.7 1.5l1.7 1.5M440.3 113l1.7 1.5l-1.7 1.5" fill="none" stroke="#4676b4" stroke-width="1"/><path d="M560.80 113.90h5.20l-2.60 2.60z" fill="#555"/><text x="587" y="120" font-family="Liberation Sans" font-size="14.5" fill="#555">$</text><path d="M605.00 113.70h5.20l-2.60 2.60z" fill="#555"/><text x="619.2" y="121" font-family="Liberation Sans" font-size="15.5" fill="#555" stroke="#555" stroke-width="0.3" textLength="12.5" lengthAdjust="spacingAndGlyphs">%</text><text x="639.5" y="118.3" font-family="Liberation Sans" font-weight="bold" font-size="9.6" fill="#555" letter-spacing="-0.6">000</text><rect x="662" y="104" width="1" height="22" fill="#d5d5d5"/><path d="M677.5 111.6h-6.5M673.3 109.4l-2.2 2.2l2.2 2.2" fill="none" stroke="#5b80aa" stroke-width="1.3"/><text x="679.6" y="114.2" font-family="Liberation Sans" font-size="8.2" fill="#444" stroke="#444" stroke-width="0.2">0</text><text x="671.5" y="122.2" font-family="Liberation Sans" font-size="8.2" fill="#444" stroke="#444" stroke-width="0.2" letter-spacing="-0.5">,00</text><text x="693.5" y="114.2" font-family="Liberation Sans" font-size="8.2" fill="#444" stroke="#444" stroke-width="0.2" letter-spacing="-0.5">,00</text><path d="M692.3 118.7h6.5M696.6 116.5l2.2 2.2l-2.2 2.2" fill="none" stroke="#5b80aa" stroke-width="1.3"/><text x="698.8" y="122.2" font-family="Liberation Sans" font-size="8.2" fill="#444" stroke="#444" stroke-width="0.2" letter-spacing="-0.5">,0</text><path d="M77.5 150v-6.5h6.5" fill="none" stroke="#8a8a8a" stroke-width="1"/><path d="M80 146l4 4M81.5 150h2.5v-2.5" fill="none" stroke="#8a8a8a" stroke-width="1"/><path d="M286.5 150v-6.5h6.5" fill="none" stroke="#8a8a8a" stroke-width="1"/><path d="M289 146l4 4M290.5 150h2.5v-2.5" fill="none" stroke="#8a8a8a" stroke-width="1"/><path d="M565.5 150v-6.5h6.5" fill="none" stroke="#8a8a8a" stroke-width="1"/><path d="M568 146l4 4M569.5 150h2.5v-2.5" fill="none" stroke="#8a8a8a" stroke-width="1"/><path d="M705.5 150v-6.5h6.5" fill="none" stroke="#8a8a8a" stroke-width="1"/><path d="M708 146l4 4M709.5 150h2.5v-2.5" fill="none" stroke="#8a8a8a" stroke-width="1"/><rect x="743.5" y="70.5" width="27" height="24" fill="#fff"/><rect x="751" y="71" width="6" height="5.3" fill="#d9543a"/><rect x="751" y="77" width="11.5" height="5.3" fill="#4676b4"/><rect x="751" y="83" width="9" height="5.3" fill="#d9543a"/><rect x="751" y="89" width="3.5" height="5.3" fill="#4676b4"/><path d="M743.5 70.5h27v24h-27zM743.5 76.5h27M743.5 82.5h27M743.5 88.5h27M750.8 70.5v24M763.5 70.5v24" fill="none" stroke="#6b6b6b" stroke-width="1"/><rect x="757.5" y="87.5" width="15" height="12" fill="#fff" stroke="#555" stroke-width="1.2"/><path d="M761.5 91.5h7M761.5 95h7M766.5 89.5l-3 8" stroke="#444" stroke-width="1.1"/><rect x="818.5" y="72.5" width="24" height="20" fill="#fff"/><rect x="824.5" y="77.3" width="18" height="15.3" fill="#c9d6e8"/><path d="M818.5 72.5h24v20h-24zM818.5 77.5h24M818.5 82.5h24M818.5 87.5h24M824.5 72.5v20M830.5 72.5v20M836.5 72.5v20" fill="none" stroke="#6b6b6b" stroke-width="1"/><g transform="translate(824.8 99.4)"><path d="M20.5 -23.5L23.5 -20.5L16 -10.5L12.5 -13z" fill="#6e6e6e" stroke="#f3f3f3" stroke-width="0.8"/><path d="M12 -12.5L15.5 -9.8L12.5 -6L9 -8.8z" fill="#5e5e5e" stroke="#f3f3f3" stroke-width="0.8"/><ellipse cx="8.8" cy="-4.6" rx="5" ry="3.6" transform="rotate(-40 8.8 -4.6)" fill="#fff" stroke="#4676b4" stroke-width="1"/><path d="M0 0Q2 -5.5 6.5 -7.5Q9 -5 12.5 -2.5Q8 1 0 0z" fill="#4676b4"/></g><rect x="882.5" y="70.5" width="25" height="21" fill="#fff"/><rect x="887.5" y="75.5" width="14" height="10" fill="#c9d6e8"/><path d="M882.5 70.5h25v21h-25zM882.5 75.5h25M882.5 85.5h25M887.5 70.5v21M901.5 70.5v21" fill="none" stroke="#6b6b6b" stroke-width="1"/><g transform="translate(888.3 97.6)"><path d="M20.5 -23.5L23.5 -20.5L16 -10.5L12.5 -13z" fill="#6e6e6e" stroke="#f3f3f3" stroke-width="0.8"/><path d="M12 -12.5L15.5 -9.8L12.5 -6L9 -8.8z" fill="#5e5e5e" stroke="#f3f3f3" stroke-width="0.8"/><ellipse cx="8.8" cy="-4.6" rx="5" ry="3.6" transform="rotate(-40 8.8 -4.6)" fill="#fff" stroke="#4676b4" stroke-width="1"/><path d="M0 0Q2 -5.5 6.5 -7.5Q9 -5 12.5 -2.5Q8 1 0 0z" fill="#4676b4"/></g><rect x="940.5" y="70.5" width="14" height="5" fill="#fff" stroke="#6b6b6b" stroke-width="1"/><path d="M947.5 70.5v5" stroke="#6b6b6b" stroke-width="1"/><rect x="951.5" y="78.5" width="14" height="5" fill="#c9d6e8" stroke="#6b6b6b" stroke-width="1"/><path d="M958.5 78.5v5" stroke="#6b6b6b" stroke-width="1"/><rect x="940.5" y="86.5" width="14" height="10" fill="#fff" stroke="#6b6b6b" stroke-width="1"/><path d="M947.5 86.5v10" stroke="#6b6b6b" stroke-width="1"/><path d="M940.5 91.5h14" stroke="#6b6b6b" stroke-width="1"/><path d="M947.8 81.2h-5.5M944.5 78.8l-2.4 2.4l2.4 2.4" fill="none" stroke="#4676b4" stroke-width="1.8"/><rect x="985.5" y="70.5" width="14" height="5" fill="#fff" stroke="#6b6b6b" stroke-width="1"/><path d="M992.5 70.5v5" stroke="#6b6b6b" stroke-width="1"/><rect x="991.5" y="78.5" width="12" height="5" fill="#c9d6e8" stroke="#6b6b6b" stroke-width="1"/><path d="M997.5 78.5v5" stroke="#6b6b6b" stroke-width="1"/><rect x="985.5" y="87.5" width="14" height="10" fill="#fff" stroke="#6b6b6b" stroke-width="1"/><path d="M992.5 87.5v10" stroke="#6b6b6b" stroke-width="1"/><path d="M985.5 92.5h14" stroke="#6b6b6b" stroke-width="1"/><path d="M1000.5 76l13.5 12.5M1014 76l-13.5 12.5" stroke="#d24a43" stroke-width="2"/><path d="M1034.5 69.5v4.5M1056.5 69.5v4.5M1035.5 71.8h20M1038.5 69.5l-2.6 2.3l2.6 2.3M1052.5 69.5l2.6 2.3l-2.6 2.3" fill="none" stroke="#4676b4" stroke-width="1.1"/><rect x="1034.5" y="75.5" width="27" height="20" fill="#fff" stroke="#6b6b6b" stroke-width="1"/><path d="M1034.5 80.5h27M1034.5 90.5h27M1041.5 75.5v20M1049.5 75.5v20M1056.5 75.5v20" stroke="#6b6b6b" stroke-width="1"/><rect x="1042" y="81" width="7.5" height="9.5" fill="#4676b4"/><path d="M1034.5 95.5v3.5h7l1.5-2l1.5 2h10l1.5-3.5" fill="none" stroke="#6b6b6b" stroke-width="1"/><path d="M1099.5 69.5h-13l6 6.5l-6 6.5h13.5" fill="none" stroke="#3a3a3a" stroke-width="2.2" stroke-linejoin="miter"/><path d="M1107.00 74.70h5.20l-2.60 2.60z" fill="#555"/><rect x="1086.5" y="91.5" width="13" height="14.5" fill="#fff" stroke="#6b6b6b" stroke-width="1"/><rect x="1086" y="91" width="14" height="3" fill="#6b6b6b"/><path d="M1093 95.5v7.5M1089.8 99.8l3.2 3.2l3.2-3.2" fill="none" stroke="#4676b4" stroke-width="2"/><path d="M1105.10 97.90h5.20l-2.60 2.60z" fill="#555"/><rect x="1085" y="117.8" width="15.5" height="6.4" rx="1.2" transform="rotate(-40 1092.7 121)" fill="#e27a90"/><path d="M1088.3 119.3l3.6 4.3" stroke="#f3f3f3" stroke-width="0.9"/><path d="M1105.10 120.40h5.20l-2.60 2.60z" fill="#555"/><text x="1129.6" y="82.2" font-family="Liberation Sans" font-weight="bold" font-size="15" fill="#4676b4" textLength="11.5" lengthAdjust="spacingAndGlyphs">A</text><text x="1130.4" y="96.5" font-family="Liberation Sans" font-weight="bold" font-size="15" fill="#9474c0" textLength="10.2" lengthAdjust="spacingAndGlyphs">Z</text><path d="M1142 78h17l-6.5 6.5v7.8h-4v-7.8z" fill="#6b6b6b"/><path d="M1149.6 85v6.3h1.8v-6.3" fill="#f3f3f3"/><circle cx="1213" cy="79.4" r="8.7" fill="#fff" stroke="#4a7ab8" stroke-width="2.6"/><path d="M1206.5 86.5L1198.5 95" stroke="#4a7ab8" stroke-width="3.6" stroke-linecap="round"/><rect x="1273.5" y="71" width="27.5" height="24.5" fill="#fff" stroke="#6b6b6b" stroke-width="1"/><rect x="1273" y="70.8" width="28.5" height="4.7" fill="#4676b4"/><path d="M1276 77.5h5" stroke="#777" stroke-width="1"/><rect x="1285.5" y="76.5" width="12.5" height="3.5" fill="none" stroke="#777" stroke-width="1"/><path d="M1276 83.5h5" stroke="#777" stroke-width="1"/><rect x="1285.5" y="82.5" width="12.5" height="3.5" fill="none" stroke="#777" stroke-width="1"/><path d="M1276 89.5h5" stroke="#777" stroke-width="1"/><rect x="1285.5" y="88.5" width="12.5" height="3.5" fill="none" stroke="#777" stroke-width="1"/><path d="M1345.5 148.5l4.2-4.2l4.2 4.2" fill="none" stroke="#666" stroke-width="1.5"/><path d="M148.5 173l10 10M158.5 173l-10 10" stroke="#b7b7b7" stroke-width="1.2"/><path d="M184.5 178l3.5 4l8-8.5" fill="none" stroke="#bdbdbd" stroke-width="2"/><text x="220" y="181.2" font-family="Liberation Serif" font-style="italic" font-weight="bold" font-size="13" fill="#555">f</text><text x="225" y="181.2" font-family="Liberation Serif" font-style="italic" font-weight="bold" font-size="10" fill="#555">x</text><path d="M1346.5 174.5l3.8 3.8l3.8-3.8" fill="none" stroke="#666" stroke-width="2"/><path d="M19.5 205v11.5h-11.5z" fill="#b9b9b9"/><circle cx="52.5" cy="711" r="2.8" fill="#555"/><path d="M55 709h7v11.5h-12.5v-7" fill="none" stroke="#555" stroke-width="1"/><rect x="55" y="708.5" width="7" height="2.2" fill="#555"/><rect x="51.5" y="713.0" width="1.3" height="1.3" fill="#555"/><rect x="51.5" y="715.5" width="1.3" height="1.3" fill="#555"/><rect x="51.5" y="718.0" width="1.3" height="1.3" fill="#555"/><rect x="54.0" y="713.0" width="1.3" height="1.3" fill="#555"/><rect x="54.0" y="715.5" width="1.3" height="1.3" fill="#555"/><rect x="54.0" y="718.0" width="1.3" height="1.3" fill="#555"/><rect x="56.5" y="713.0" width="1.3" height="1.3" fill="#555"/><rect x="56.5" y="715.5" width="1.3" height="1.3" fill="#555"/><rect x="56.5" y="718.0" width="1.3" height="1.3" fill="#555"/><rect x="59.0" y="713.0" width="1.3" height="1.3" fill="#555"/><rect x="59.0" y="715.5" width="1.3" height="1.3" fill="#555"/><rect x="59.0" y="718.0" width="1.3" height="1.3" fill="#555"/><rect x="883" y="707.5" width="15.5" height="10" fill="#555"/><path d="M884 721.5h4" stroke="#555" stroke-width="1.2"/><circle cx="893.5" cy="717.5" r="4.8" fill="#f3f3f3"/><circle cx="893.5" cy="717.5" r="3.3" fill="none" stroke="#555" stroke-width="2.3" stroke-dasharray="1.6 1"/><circle cx="893.5" cy="717.5" r="2.6" fill="none" stroke="#555" stroke-width="1.2"/><rect x="1090.5" y="708.5" width="12" height="12" fill="none" stroke="#666" stroke-width="1"/><path d="M1090.5 712.5h12M1090.5 716.5h12M1094.5 708.5v12M1098.5 708.5v12" stroke="#666" stroke-width="1"/><rect x="1128.5" y="708.5" width="13" height="12" fill="none" stroke="#666" stroke-width="1"/><rect x="1130.5" y="710.5" width="9" height="8" fill="none" stroke="#666" stroke-width="1"/><path d="M1132 712.5h6M1132 714.5h6M1132 716.5h6" stroke="#666" stroke-width="0.9"/><rect x="1166.5" y="708.5" width="13" height="12" fill="none" stroke="#666" stroke-width="1"/><path d="M1166.5 716.5h6.5v-8M1173 712.5h3.5v-4" fill="none" stroke="#666" stroke-width="1"/><rect x="1197" y="714.5" width="5.5" height="1.6" fill="#555"/><rect x="1207" y="715" width="100" height="1" fill="#bdbdbd"/><rect x="1255" y="709" width="5" height="11" fill="#666"/><path d="M1310 715.3h8M1314 711.3v8" stroke="#555" stroke-width="1.6"/></svg>
</body></html>
